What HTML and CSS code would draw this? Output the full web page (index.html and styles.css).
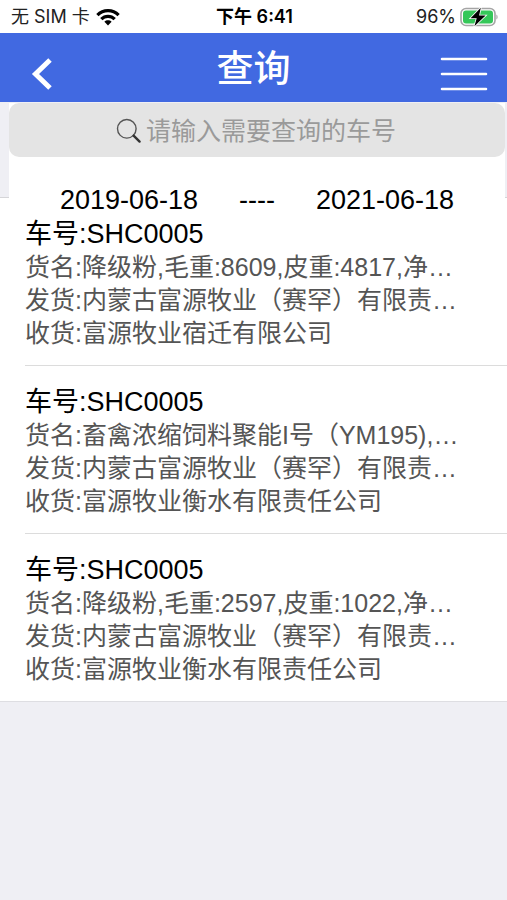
FILE: index.html
```html
<!DOCTYPE html>
<html lang="zh-CN">
<head>
<meta charset="utf-8">
<meta name="viewport" content="width=device-width, initial-scale=1">
<title>查询</title>
<link rel="stylesheet" href="styles.css">
</head>
<body>
<div class="status">
  <div class="status-left">
    <span>无 SIM 卡</span>
    <svg class="wifi" viewBox="0 0 24 18" aria-hidden="true">
      <g fill="none" stroke="#000" stroke-width="3.2">
        <path d="M1.4 7.2C7.2 1.1 16.8 1.1 22.6 7.2"/>
        <path d="M5.3 11.2C9 7.3 15 7.3 18.7 11.2"/>
      </g>
      <path d="M12 17.4l-3.6-3.7c2-1.9 5.2-1.9 7.2 0z"/>
    </svg>
  </div>
  <time class="status-time">下午 6:41</time>
  <div class="status-right">
    <span>96%</span>
    <svg class="battery" viewBox="0 0 38 20" aria-hidden="true">
      <rect x="1" y="1.5" width="34" height="17" rx="5" fill="#fff" stroke="#a5a5a5" stroke-width="1.6"/>
      <rect x="3" y="3.5" width="30" height="13" rx="3" fill="#35c759"/>
      <path d="M36.4 7.5c1.6.8 1.6 4.2 0 5z" fill="#a5a5a5"/>
      <path d="M20.8.8L10.6 11.3h6.1l-2.3 7.9L25.6 8.6h-6.5z" stroke="#fff" stroke-width="1.6" paint-order="stroke"/>
    </svg>
  </div>
</div>

<header class="navbar">
  <button class="nav-button nav-back" type="button" aria-label="返回">
    <svg class="back" viewBox="0 0 22 34" aria-hidden="true"><path d="M19 3L4.5 17 19 31" fill="none" stroke="#fff" stroke-width="5"/></svg>
  </button>
  <h1>查询</h1>
  <button class="nav-button nav-menu" type="button" aria-label="菜单">
    <svg class="menu" viewBox="0 0 48 36" aria-hidden="true"><path d="M2 3h44M2 18h44M2 33h44" stroke="#fff" stroke-width="2.6" stroke-linecap="round"/></svg>
  </button>
</header>

<main>
  <section class="filter">
    <div class="panel">
      <label class="search">
        <svg class="magnifier" viewBox="0 0 26 26" aria-hidden="true">
          <circle cx="10.8" cy="10.8" r="9.3" fill="none" stroke="#555" stroke-width="1.4"/>
          <path d="M17.6 17.6l6 6" stroke="#333" stroke-width="2.4" stroke-linecap="round"/>
        </svg>
        <input type="text" placeholder="请输入需要查询的车号" aria-label="车号">
      </label>
      <div class="dates">
        <button type="button">2019-06-18</button>
        <span>----</span>
        <button type="button">2021-06-18</button>
      </div>
    </div>
  </section>

  <ul class="list">
    <li class="record">
      <h2>车号:SHC0005</h2>
      <p>货名:降级粉,毛重:8609,皮重:4817,净…</p>
      <p>发货:内蒙古富源牧业（赛罕）有限责…</p>
      <p>收货:富源牧业宿迁有限公司</p>
    </li>
    <li class="record">
      <h2>车号:SHC0005</h2>
      <p>货名:畜禽浓缩饲料聚能I号（YM195),…</p>
      <p>发货:内蒙古富源牧业（赛罕）有限责…</p>
      <p>收货:富源牧业衡水有限责任公司</p>
    </li>
    <li class="record">
      <h2>车号:SHC0005</h2>
      <p>货名:降级粉,毛重:2597,皮重:1022,净…</p>
      <p>发货:内蒙古富源牧业（赛罕）有限责…</p>
      <p>收货:富源牧业衡水有限责任公司</p>
    </li>
  </ul>
</main>
</body>
</html>
```
FILE: styles.css
```css
* {
  box-sizing: border-box;
}

body {
  margin: 0;
  min-height: 100vh;
  background: #efeff4;
  color: #000;
  font-family: "Liberation Sans", "Noto Sans CJK SC", sans-serif;
}

button,
input {
  margin: 0;
  padding: 0;
  border: 0;
  background: none;
  color: inherit;
  font: inherit;
}

h1,
h2,
p,
ul {
  margin: 0;
  padding: 0;
}

svg {
  display: block;
  flex: none;
}

.status {
  display: grid;
  grid-template-columns: 1fr auto 1fr;
  align-items: center;
  height: 33px;
  padding: 0 9px 0 11px;
  background: #fff;
  color: #222;
  font-family: Inter, "Noto Sans CJK SC", sans-serif;
  font-size: 18px;
  line-height: 24px;
}

.status-left,
.status-right {
  display: flex;
  align-items: center;
  gap: 6px;
}

.status-right {
  justify-content: flex-end;
  gap: 4px;
}

.status-time {
  color: #000;
  font-weight: 600;
}

.wifi {
  width: 24px;
  height: 18px;
}

.battery {
  width: 38px;
  height: 20px;
}

.navbar {
  display: grid;
  grid-template-columns: 1fr auto 1fr;
  align-items: center;
  height: 69px;
  padding: 0 19px;
  background: #4169e1;
  color: #fff;
}

.navbar h1 {
  padding-top: 4px;
  font-size: 37px;
  font-weight: 500;
  line-height: 65px;
}

.nav-button {
  padding-top: 12px;
}

.nav-back {
  justify-self: start;
  padding-left: 12px;
}

.nav-menu {
  justify-self: end;
}

.back {
  width: 22px;
  height: 34px;
}

.menu {
  width: 48px;
  height: 36px;
}

.filter {
  height: 96px;
  padding: 1px 2px 0 9px;
  border-bottom: 1px solid #d5d5d8;
}

.panel {
  position: relative;
  background: #fff;
}

.search {
  display: flex;
  align-items: center;
  justify-content: center;
  gap: 4px;
  height: 54px;
  padding-top: 2px;
  border-radius: 10px;
  background: #e4e4e4;
}

.magnifier {
  width: 26px;
  height: 26px;
}

.search input {
  width: 252px;
  height: 38px;
  outline: 0;
  font-size: 25px;
}

.search input::placeholder {
  color: #9a9a9a;
  opacity: 1;
}

.dates {
  display: flex;
  justify-content: center;
  align-items: center;
  gap: 41px;
  padding-top: 27px;
  font-size: 27px;
  line-height: 32px;
}

.list {
  list-style: none;
  background: #fff;
  border-bottom: 1px solid #dedee2;
}

.record {
  padding: 19px 35px 15px 0;
  margin-left: 25px;
}

.record + .record {
  border-top: 1px solid #dcdcdc;
}

.record h2 {
  font-size: 27px;
  font-weight: 400;
  line-height: 34px;
}

.record p {
  overflow: hidden;
  color: #555;
  font-size: 25px;
  line-height: 33px;
  text-overflow: ellipsis;
  white-space: nowrap;
}
```
